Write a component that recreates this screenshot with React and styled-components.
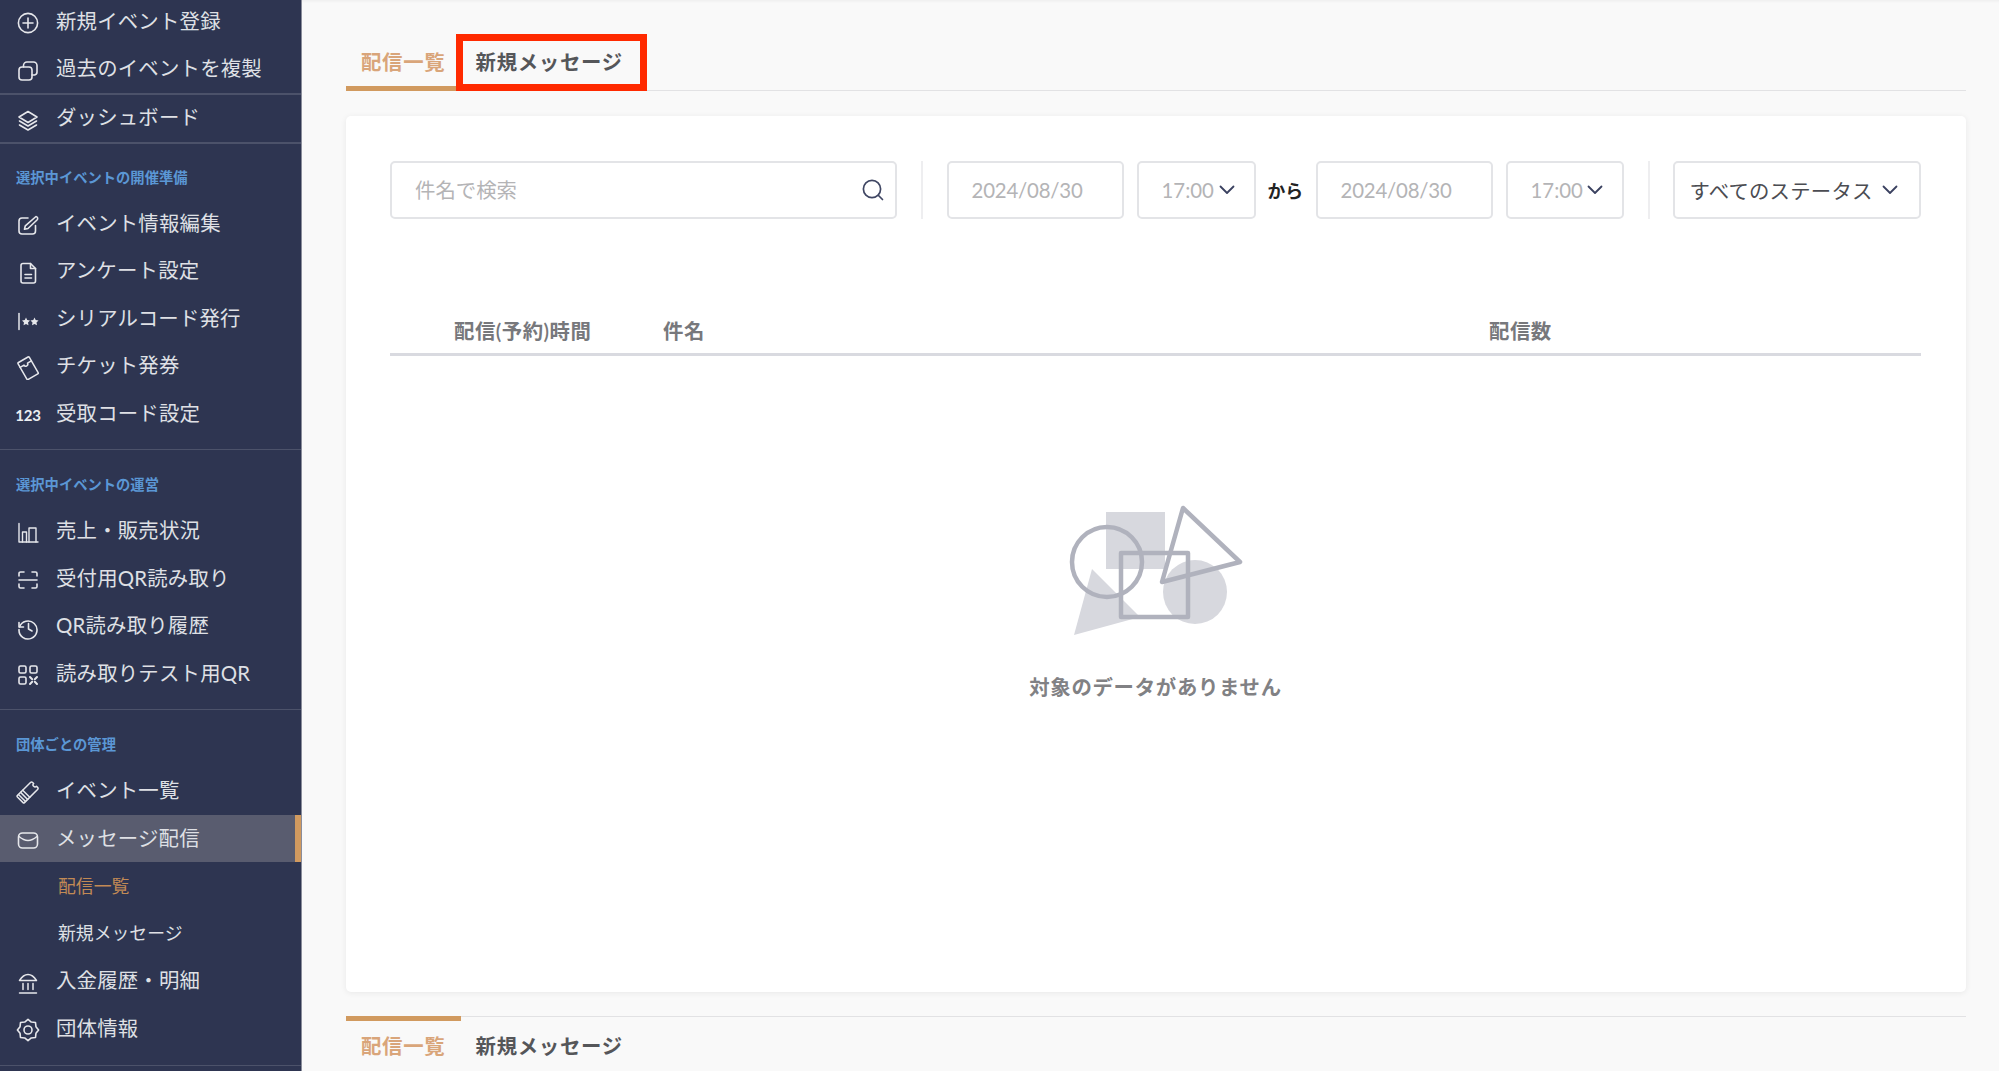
import React from "react";
import styled, { createGlobalStyle } from "styled-components";

const Global = createGlobalStyle`
  html, body { margin: 0; padding: 0; height: 100%; overflow: hidden; background: #f9f9f9; }
  * { box-sizing: border-box; }
  body { font-family: Lato, "Noto Sans CJK JP", sans-serif; }
`;

const Page = styled.div`
  display: flex;
  width: 1999px;
  height: 1071px;
  overflow: hidden;
`;

const Sidebar = styled.nav`
  flex: 0 0 302px;
  height: 1071px;
  overflow: hidden;
  background: #2e3551;
  border-right: 1px solid #8a8d9b;
  color: #e3e4e8;
`;

const SidebarInner = styled.div`
  margin-top: -2px;
`;

const Rule = styled.div`
  height: 1.5px;
  background: #4c526a;
  margin-top: ${(p) => p.$mt || 0}px;
`;

const SectionLabel = styled.div`
  height: ${(p) => p.$h || 57}px;
  padding: ${(p) => (p.$h ? 24 : 25)}px 0 0 16px;
  font-size: 14.3px;
  line-height: 20px;
  font-weight: 700;
  color: #5b97d5;
`;

const Row = styled.div`
  position: relative;
  display: flex;
  align-items: center;
  height: 47.6px;
  padding-left: 16px;
  font-size: 20.4px;
  letter-spacing: 0.2px;
  color: #dfe0e5;
  background: ${(p) => (p.$active ? "#595c6f" : "transparent")};
`;

const ActiveBar = styled.span`
  position: absolute;
  top: 0;
  right: 0;
  bottom: 0;
  width: 6px;
  background: #d19a5f;
`;

const IconSlot = styled.span`
  flex: 0 0 24px;
  width: 24px;
  height: 24px;
  display: flex;
  align-items: center;
  justify-content: center;
  margin-right: 16px;
  margin-top: 3px;
  color: #e6e7eb;
`;

const NumIcon = styled.span`
  font-size: 15px;
  font-weight: 700;
  letter-spacing: -0.2px;
  color: #eceef1;
`;

const RowLabel = styled.span`
  line-height: 30px;
  margin-top: -2px;
`;

const SubRow = styled.div`
  display: flex;
  align-items: center;
  height: 47.6px;
  padding: 0 0 3px 58px;
  font-size: 17.85px;
  color: ${(p) => (p.$active ? "#c28a55" : "#dfe0e5")};
`;

const Main = styled.main`
  flex: 1;
  min-width: 0;
  display: flex;
  flex-direction: column;
  padding: 38px 33px 0 44px;
  background: #f9f9f9;
  box-shadow: inset 0 3px 3px -2px #ececec;
`;

const TabBar = styled.div`
  display: flex;
  border-style: solid;
  border-color: #e2e2e4;
  border-width: ${(p) => (p.$bottom ? "1.5px 0 0" : "0 0 1.5px")};
  flex: none;
`;

const Tab = styled.div`
  position: relative;
  padding: ${(p) => (p.$bottom ? "10px 15px 0" : "9px 15px 14px")};
  margin-bottom: ${(p) => (p.$bottom ? 0 : -1.5)}px;
  height: ${(p) => (p.$bottom ? "auto" : "53px")};
  font-size: 20.4px;
  line-height: 30px;
  font-weight: 600;
  letter-spacing: 0.7px;
  color: ${(p) => (p.$active ? "#d9a57a" : "#555659")};
  white-space: nowrap;
  min-width: ${(p) => (p.$active ? "114.6px" : "auto")};
  ${(p) =>
    p.$active
      ? p.$bottom
        ? "border-top: 5px solid #d19a5f; margin-top: -1px;"
        : "border-bottom: 5px solid #d19a5f;"
      : p.$bottom
      ? "padding-top: 14px;"
      : ""}
`;

const Callout = styled.span`
  position: absolute;
  left: -5px;
  right: -9px;
  top: -4px;
  bottom: 0;
  border: 7px solid #ff2a00;
  pointer-events: none;
`;

const Card = styled.section`
  flex: none;
  height: 876px;
  margin: 25px 0 24px;
  padding: 45px 45px 0 44px;
  background: #ffffff;
  border-radius: 5px;
  box-shadow: 0 1px 6px rgba(0, 0, 0, 0.07);
`;

const Toolbar = styled.div`
  display: flex;
  align-items: stretch;
  height: 58px;
`;

const Field = styled.div`
  display: flex;
  align-items: center;
  justify-content: ${(p) => p.$justify || "flex-start"};
  flex: ${(p) => (p.$w ? `0 0 ${p.$w}px` : "1")};
  margin-right: ${(p) => p.$mr || 0}px;
  padding: 0 ${(p) => p.$pr ?? 16}px 0 ${(p) => p.$pl ?? 16}px;
  border: 2px solid #e3e4e7;
  border-radius: 5px;
  background: #fff;
  font-size: 20.4px;
  letter-spacing: ${(p) => p.$ls ?? 0}px;
  color: ${(p) => (p.$dark ? "#4b4c52" : "#b4b4b6")};
  white-space: nowrap;
`;

const FieldText = styled.span`
  margin-top: -1px;
`;

const Separator = styled.div`
  flex: 0 0 2px;
  background: #eeeef0;
  margin: 0 ${(p) => p.$mr ?? 24}px 0 24px;
`;

const From = styled.span`
  flex: 0 0 36px;
  margin-right: 12px;
  align-self: center;
  font-size: 17.85px;
  font-weight: 700;
  color: #222;
  white-space: nowrap;
`;

const HeaderRow = styled.div`
  display: grid;
  grid-template-columns: 209px 826px 1fr;
  margin-top: 89px;
  height: 48px;
  padding: 2px 0 0 64px;
  border-bottom: 3px solid #d9dae0;
  font-size: 20.4px;
  line-height: 30px;
  font-weight: 600;
  letter-spacing: 0.5px;
  color: #77787c;
  align-items: center;
`;

const Empty = styled.div`
  display: flex;
  flex-direction: column;
  align-items: center;
  padding: 149px 0 0 2px;
`;

const EmptyText = styled.div`
  margin-top: 33px;
  margin-left: -2px;
  font-size: 20.4px;
  line-height: 30px;
  font-weight: 600;
  color: #818184;
  letter-spacing: 0.7px;
`;

const Svg = ({ children, size = 24, sw = 1.6, ...rest }) => (
  <svg width={size} height={size} viewBox="0 0 24 24" fill="none" stroke="currentColor" strokeWidth={sw} strokeLinecap="round" strokeLinejoin="round" {...rest}>
    {children}
  </svg>
);

const gearPath =
  Array.from({ length: 16 }, (_, i) => {
    const r = i % 2 === 0 ? 10.6 : 8.6;
    const a = (i * Math.PI) / 8;
    return `${i === 0 ? "M" : "L"}${(12 + r * Math.sin(a)).toFixed(2)} ${(12 - r * Math.cos(a)).toFixed(2)}`;
  }).join("") + "Z";

const icons = {
  plus: <Svg><circle cx="12" cy="12" r="9.6" /><path d="M12 7v10M7 12h10" /></Svg>,
  copy: <Svg><rect x="3" y="8" width="13" height="13" rx="3" /><path d="M7.5 8V6.5A3.5 3.5 0 0 1 11 3h6.5A3.5 3.5 0 0 1 21 6.5V13a3 3 0 0 1-2.5 3H16" /></Svg>,
  layers: <Svg><path d="M12 3.5 21 9l-9 5.5L3 9z" /><path d="m3.5 13 8.5 5 8.5-5" /><path d="m3.5 17 8.5 5 8.5-5" /></Svg>,
  edit: <Svg><path d="M19.5 12.5V18a3 3 0 0 1-3 3H6a3 3 0 0 1-3-3V8a3 3 0 0 1 3-3h6" /><path d="M20 3.5a2 2 0 0 1 1 3.5l-9 8.5-3.5.8.8-3.5z" /></Svg>,
  doc: <Svg><path d="M5 4.5A2 2 0 0 1 7 2.5h7.5l5 5V20a2 2 0 0 1-2 2H7a2 2 0 0 1-2-2z" /><path d="M14.5 2.5v5h5M9 13.5h6.5M9 17h6.5" /></Svg>,
  serial: (
    <Svg sw={1.5}>
      <path d="M3 5.5v16" />
      <path fill="currentColor" stroke="none" d="m10 9.5 1.2 2.5 2.8.4-2 2 .5 2.8-2.5-1.3-2.5 1.3.5-2.8-2-2 2.8-.4zM18.5 9.5l1.2 2.5 2.8.4-2 2 .5 2.8-2.5-1.3-2.5 1.3.5-2.8-2-2 2.8-.4z" />
    </Svg>
  ),
  tag: (
    <Svg sw={1.5}>
      <g transform="rotate(-30 12 12)">
        <path d="M6.5 2.5h11a1 1 0 0 1 1 1V21a1 1 0 0 1-1 1h-11a1 1 0 0 1-1-1V3.5a1 1 0 0 1 1-1z" />
        <path d="M5.5 7.5h4.5a2 2 0 0 0 4 0h4.5" />
      </g>
    </Svg>
  ),
  num: <NumIcon>123</NumIcon>,
  chart: <Svg sw={1.4}><path d="M3 2.5V21h19" /><path d="M6.5 21V11h4v10M13 21V7h7v14" /></Svg>,
  scan: <Svg><path d="M3 8V5.5A1.5 1.5 0 0 1 4.5 4H8M16 4h3.5A1.5 1.5 0 0 1 21 5.5V8M3 16v2.5A1.5 1.5 0 0 0 4.5 20H8M16 20h3.5a1.5 1.5 0 0 0 1.5-1.5V16M3 12h18" /></Svg>,
  history: <Svg><path d="M3 6.5V11h4.5" /><path d="M3.5 11A9 9 0 1 1 3 13.5" /><path d="M12.5 7.5V13l3.5 2" /></Svg>,
  qr: (
    <Svg sw={1.6}>
      <rect x="3" y="3" width="7" height="7" rx="1.5" /><rect x="14" y="3" width="7" height="7" rx="1.5" /><rect x="3" y="14" width="7" height="7" rx="1.5" />
      <path d="M14 14l2.2 2.2M21 14l-2.2 2.2M14 21l2.2-2.2M21 21l-2.2-2.2" strokeWidth="2" />
    </Svg>
  ),
  ticket: (
    <Svg sw={1.5}>
      <g transform="rotate(45 12 12)">
        <path d="M7 3.5A1.5 1.5 0 0 1 8.5 2H10a2 2 0 0 0 4 0h1.5A1.5 1.5 0 0 1 17 3.5V22a1 1 0 0 1-1 1H8a1 1 0 0 1-1-1z" />
        <path d="M7 14.5h10M7 17.5h10M7 20.5h10" />
      </g>
    </Svg>
  ),
  mail: <Svg><rect x="2.5" y="5" width="19" height="15" rx="4" /><path d="M3 8.5c3 2.5 6 4 9 4s6-1.5 9-4" /></Svg>,
  bank: <Svg sw={1.5}><path d="M3.5 9.5C6 5.5 9 3.5 12 3.5s6 2 8.5 6z" /><path d="M7 12.5v6M12 12.5v6M17 12.5v6M3.5 22h17" /></Svg>,
  gear: <Svg><path d={gearPath} /><circle cx="12" cy="12" r="4" /></Svg>,
};

const NavRow = ({ icon, label, active }) => (
  <Row $active={active}>
    <IconSlot>{icons[icon]}</IconSlot>
    <RowLabel>{label}</RowLabel>
    {active && <ActiveBar />}
  </Row>
);

const Chevron = () => (
  <svg width="18" height="18" viewBox="0 0 18 18" fill="none" stroke="#3a4160" strokeWidth="1.8" strokeLinecap="round" strokeLinejoin="round">
    <path d="M2.5 5.5 9 12l6.5-6.5" />
  </svg>
);

const Search = () => (
  <svg width="24" height="24" viewBox="0 0 24 24" fill="none" stroke="#3f4663" strokeWidth="1.7" strokeLinecap="round">
    <circle cx="11" cy="11" r="8.6" />
    <path d="m17.5 17.5 4 4" />
  </svg>
);

const Illustration = () => (
  <svg width="176" height="134" viewBox="0 0 176 134">
    <rect x="37" y="7" width="59" height="57" fill="#d7d8de" />
    <circle cx="126" cy="87" r="32" fill="#d7d8de" />
    <path d="M23 64 5 130l66-18z" fill="#d7d8de" />
    <g fill="none" stroke="#b0b2bd" strokeWidth="4.5" strokeLinejoin="round">
      <circle cx="38" cy="57" r="35" />
      <rect x="52" y="48" width="67" height="64" />
      <path d="M114 3 171 57 93 77z" />
    </g>
  </svg>
);

const TopTabs = ({ bottom }) => (
  <TabBar $bottom={bottom}>
    <Tab $active $bottom={bottom}>配信一覧</Tab>
    <Tab $bottom={bottom}>
      新規メッセージ
      {!bottom && <Callout />}
    </Tab>
  </TabBar>
);

export default function App() {
  return (
    <>
      <Global />
      <Page>
        <Sidebar>
          <SidebarInner>
            <NavRow icon="plus" label="新規イベント登録" />
            <NavRow icon="copy" label="過去のイベントを複製" />
            <Rule />
            <NavRow icon="layers" label="ダッシュボード" />
            <Rule />
            <SectionLabel $h={56}>選択中イベントの開催準備</SectionLabel>
            <NavRow icon="edit" label="イベント情報編集" />
            <NavRow icon="doc" label="アンケート設定" />
            <NavRow icon="serial" label="シリアルコード発行" />
            <NavRow icon="tag" label="チケット発券" />
            <NavRow icon="num" label="受取コード設定" />
            <Rule $mt={11} />
            <SectionLabel>選択中イベントの運営</SectionLabel>
            <NavRow icon="chart" label="売上・販売状況" />
            <NavRow icon="scan" label="受付用QR読み取り" />
            <NavRow icon="history" label="QR読み取り履歴" />
            <NavRow icon="qr" label="読み取りテスト用QR" />
            <Rule $mt={11} />
            <SectionLabel>団体ごとの管理</SectionLabel>
            <NavRow icon="ticket" label="イベント一覧" />
            <NavRow icon="mail" label="メッセージ配信" active />
            <SubRow $active>配信一覧</SubRow>
            <SubRow>新規メッセージ</SubRow>
            <NavRow icon="bank" label="入金履歴・明細" />
            <NavRow icon="gear" label="団体情報" />
            <Rule $mt={12} />
          </SidebarInner>
        </Sidebar>
        <Main>
          <TopTabs />
          <Card>
            <Toolbar>
              <Field $w={506.5} $pl={23} $pr={10} $justify="space-between">
                <FieldText>件名で検索</FieldText>
                <Search />
              </Field>
              <Separator />
              <Field $w={177.5} $mr={12.5} $pl={23} $ls={-0.2}>2024/08/30</Field>
              <Field $w={119} $mr={12} $pl={23} $pr={18} $justify="space-between">
                <span>17:00</span>
                <Chevron />
              </Field>
              <From>から</From>
              <Field $w={177.5} $mr={12.5} $pl={23} $ls={-0.2}>2024/08/30</Field>
              <Field $w={118} $pl={23} $pr={18} $justify="space-between">
                <span>17:00</span>
                <Chevron />
              </Field>
              <Separator $mr={23} />
              <Field $dark $pl={15} $pr={20} $ls={0.2} $justify="space-between">
                <span>すべてのステータス</span>
                <Chevron />
              </Field>
            </Toolbar>
            <HeaderRow>
              <span>配信(予約)時間</span>
              <span>件名</span>
              <span>配信数</span>
            </HeaderRow>
            <Empty>
              <Illustration />
              <EmptyText>対象のデータがありません</EmptyText>
            </Empty>
          </Card>
          <TopTabs bottom />
        </Main>
      </Page>
    </>
  );
}
